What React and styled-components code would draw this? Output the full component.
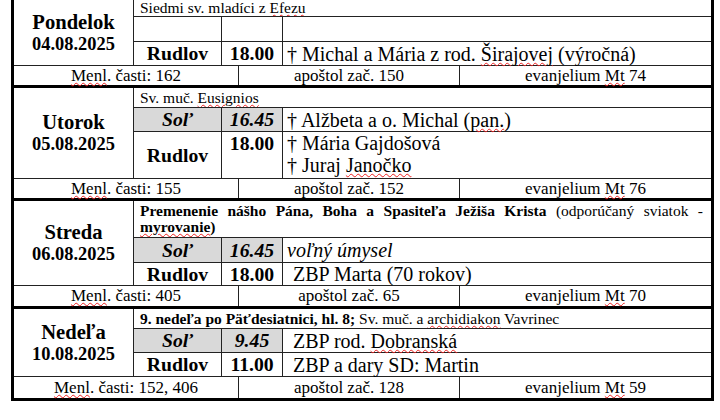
import React from "react";
import styled, { createGlobalStyle } from "styled-components";

const Global = createGlobalStyle`
  html, body { margin: 0; padding: 0; background: #fff; }
  body { font-family: "Liberation Serif", "Times New Roman", serif; color: #000; }
  * { box-sizing: border-box; }
`;

const Page = styled.div`
  padding-left: 11px;
  width: 720px;
  height: 420px;
  overflow: hidden;
`;

const Table = styled.div`
  width: 703px;
  border-left: 3px solid #000;
  border-right: 3px solid #000;
  border-bottom: 3px solid #000;
`;

const Block = styled.section`
  border-top: ${(p) => (p.$first ? "none" : "3px solid #000")};
`;

const Main = styled.div`
  display: grid;
  grid-template-columns: 120px 88px 61px 1fr;
  grid-template-rows: ${(p) => p.$rows};
`;

const DayCell = styled.div`
  grid-column: 1;
  grid-row: 1 / -1;
  border-right: 1px solid #222;
  border-bottom: 1px solid #222;
  display: flex;
  flex-direction: column;
  align-items: center;
  justify-content: center;
  font-weight: bold;
`;

const DayName = styled.div`
  font-size: 20.6px;
  line-height: 22px;
`;

const DayDate = styled.div`
  font-size: 18.4px;
  line-height: 22px;
`;

const Feast = styled.div`
  grid-column: 2 / -1;
  border-bottom: 1px solid #222;
  font-size: 15.5px;
  line-height: ${(p) => p.$lh || 19}px;
  padding: ${(p) => p.$pt || 0}px 8px 0 6px;
  overflow: hidden;
  white-space: ${(p) => (p.$wrap ? "normal" : "nowrap")};
`;

const JustLine = styled.div`
  text-align: justify;
  text-align-last: justify;
  white-space: nowrap;
`;

const Place = styled.div`
  border-right: 1px solid #222;
  border-bottom: 1px solid #222;
  background: ${(p) => (p.$gray ? "#d9d9d9" : "#fff")};
  font-weight: bold;
  font-style: ${(p) => (p.$gray ? "italic" : "normal")};
  font-size: 19.7px;
  display: flex;
  align-items: center;
  justify-content: center;
`;

const Time = styled.div`
  border-right: 1px solid #222;
  border-bottom: 1px solid #222;
  background: ${(p) => (p.$gray ? "#d9d9d9" : "#fff")};
  font-weight: bold;
  font-style: ${(p) => (p.$gray ? "italic" : "normal")};
  font-size: 19.7px;
  line-height: ${(p) => (p.$top ? "22px" : "normal")};
  display: flex;
  align-items: ${(p) => (p.$top ? "flex-start" : "center")};
  justify-content: center;
`;

const Intent = styled.div`
  border-bottom: 1px solid #222;
  font-size: 20px;
  line-height: 22px;
  font-style: ${(p) => (p.$italic ? "italic" : "normal")};
  padding-left: ${(p) => (p.$indent ? 10 : 4)}px;
  display: flex;
  flex-direction: column;
  justify-content: ${(p) => (p.$top ? "flex-start" : "center")};
  white-space: nowrap;
`;

const Footer = styled.div`
  display: grid;
  grid-template-columns: 225px 221px 1fr;
  height: ${(p) => p.$h}px;
`;

const FootCell = styled.div`
  border-right: ${(p) => (p.$last ? "none" : "1px solid #222")};
  font-size: 17px;
  line-height: ${(p) => p.$h || 19}px;
  text-align: center;
  white-space: nowrap;
`;

const Sp = styled.span`
  text-decoration: underline wavy #e22;
  text-decoration-thickness: 1px;
  text-underline-offset: 1px;
`;

const B = styled.b`
  font-weight: bold;
`;

const days = [
  {
    first: true,
    name: "Pondelok",
    date: "04.08.2025",
    rows: "17px 25px 24px",
    feast: (
      <>
        Siedmi sv. mladíci z <Sp>Efezu</Sp>
      </>
    ),
    feastLh: 15,
    services: [
      { place: "", time: "", text: [""] },
      {
        place: "Rudlov",
        time: "18.00",
        text: [
          <>
            † Michal a Mária z rod. <Sp>Širajovej</Sp> (výročná)
          </>,
        ],
      },
    ],
    foot: ["162", "150", "74"],
    footH: 19,
  },
  {
    name: "Utorok",
    date: "05.08.2025",
    rows: "20px 24px 47px",
    feast: (
      <>
        Sv. muč. <Sp>Eusignios</Sp>
      </>
    ),
    services: [
      {
        place: "Soľ",
        time: "16.45",
        gray: true,
        text: [
          <>
            † Alžbeta a o. Michal (<Sp>pan.</Sp>)
          </>,
        ],
      },
      {
        place: "Rudlov",
        time: "18.00",
        top: true,
        text: [
          "† Mária Gajdošová",
          <>
            † Juraj <Sp>Janočko</Sp>
          </>,
        ],
      },
    ],
    foot: ["155", "152", "76"],
    footH: 19,
  },
  {
    name: "Streda",
    date: "06.08.2025",
    rows: "37px 25px 23px",
    wrap: true,
    feastLh: 16,
    feastPt: 2,
    feast: (
      <>
        <JustLine>
          <B>Premenenie nášho Pána, Boha a Spasiteľa Ježiša Krista</B> (odporúčaný sviatok -
        </JustLine>
        <div>
          <B>
            <Sp>myrovanie</Sp>)
          </B>
        </div>
      </>
    ),
    services: [
      { place: "Soľ", time: "16.45", gray: true, italic: true, text: ["voľný úmysel"] },
      { place: "Rudlov", time: "18.00", indent: true, text: ["ZBP Marta (70 rokov)"] },
    ],
    foot: ["405", "65", "70"],
    footH: 20,
  },
  {
    name: "Nedeľa",
    date: "10.08.2025",
    rows: "20px 24px 24px",
    feast: (
      <>
        <B>9. nedeľa po Päťdesiatnici, hl. 8;</B> Sv. muč. a <Sp>archidiakon</Sp> Vavrinec
      </>
    ),
    services: [
      {
        place: "Soľ",
        time: "9.45",
        gray: true,
        indent: true,
        text: [
          <>
            ZBP rod. <Sp>Dobranská</Sp>
          </>,
        ],
      },
      { place: "Rudlov", time: "11.00", indent: true, text: ["ZBP a dary SD: Martin"] },
    ],
    foot: ["152, 406", "128", "59"],
    footH: 21,
  },
];

function Day({ d }) {
  return (
    <Block $first={d.first}>
      <Main $rows={d.rows}>
        <DayCell>
          <DayName>{d.name}</DayName>
          <DayDate>{d.date}</DayDate>
        </DayCell>
        <Feast $wrap={d.wrap} $lh={d.feastLh} $pt={d.feastPt}>
          {d.feast}
        </Feast>
        {d.services.map((s, i) => (
          <React.Fragment key={i}>
            <Place $gray={s.gray}>{s.place}</Place>
            <Time $gray={s.gray} $top={s.top}>
              {s.time}
            </Time>
            <Intent $italic={s.italic} $indent={s.indent} $top={s.top}>
              {s.text.map((t, j) => (
                <div key={j}>{t}</div>
              ))}
            </Intent>
          </React.Fragment>
        ))}
      </Main>
      <Footer $h={d.footH}>
        <FootCell $h={d.footH}>
          <Sp>Menl</Sp>. časti: {d.foot[0]}
        </FootCell>
        <FootCell $h={d.footH}>apoštol zač. {d.foot[1]}</FootCell>
        <FootCell $h={d.footH} $last>
          evanjelium <Sp>Mt</Sp> {d.foot[2]}
        </FootCell>
      </Footer>
    </Block>
  );
}

export default function App() {
  return (
    <>
      <Global />
      <Page>
        <Table>
          {days.map((d) => (
            <Day key={d.date} d={d} />
          ))}
        </Table>
      </Page>
    </>
  );
}
